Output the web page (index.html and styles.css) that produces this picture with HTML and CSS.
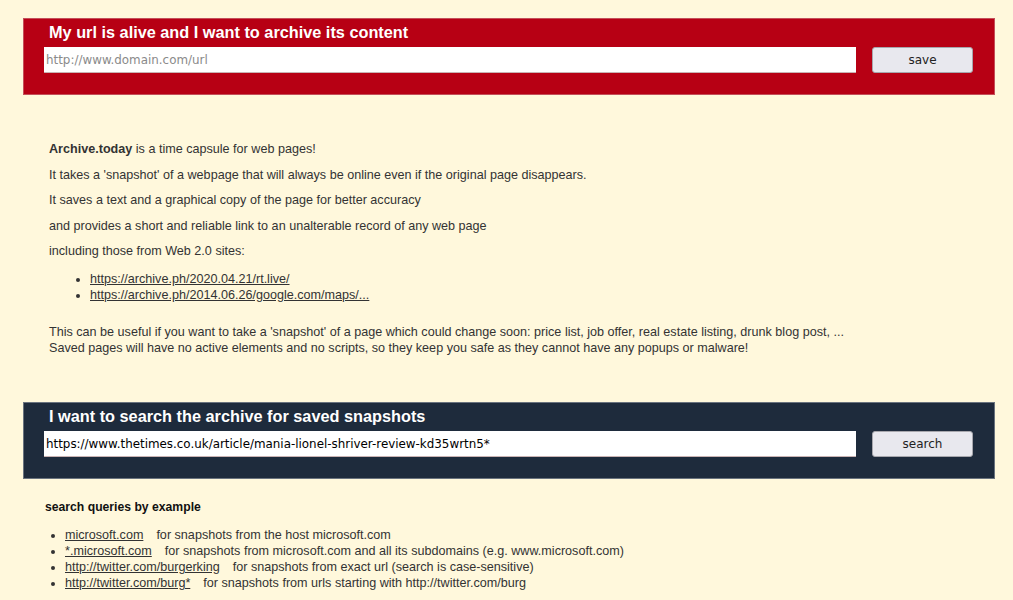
FILE: index.html
```html
<!DOCTYPE html>
<html>
<head>
<meta charset="utf-8">
<title>archive.today</title>
<link rel="stylesheet" href="styles.css">
</head>
<body>
<form class="panel panel-red">
  <div class="panel-title">My url is alive and I want to archive its content</div>
  <div class="panel-row">
    <input class="panel-input" type="text" placeholder="http://www.domain.com/url">
    <button class="panel-btn" type="button">save</button>
  </div>
</form>

<div class="about">
  <p><b>Archive.today</b> is a time capsule for web pages!</p>
  <p>It takes a 'snapshot' of a webpage that will always be online even if the original page disappears.</p>
  <p>It saves a text and a graphical copy of the page for better accuracy</p>
  <p>and provides a short and reliable link to an unalterable record of any web page</p>
  <p>including those from Web 2.0 sites:</p>
  <ul class="about-list">
    <li><a href="#">https://archive.ph/2020.04.21/rt.live/</a></li>
    <li><a href="#">https://archive.ph/2014.06.26/google.com/maps/...</a></li>
  </ul>
  <div class="about-note">This can be useful if you want to take a 'snapshot' of a page which could change soon: price list, job offer, real estate listing, drunk blog post, ...<br>Saved pages will have no active elements and no scripts, so they keep you safe as they cannot have any popups or malware!</div>
</div>

<form class="panel panel-dark">
  <div class="panel-title">I want to search the archive for saved snapshots</div>
  <div class="panel-row">
    <input class="panel-input" type="text" value="https://www.thetimes.co.uk/article/mania-lionel-shriver-review-kd35wrtn5*">
    <button class="panel-btn" type="button">search</button>
  </div>
</form>

<div class="examples">
  <div class="examples-head">search queries by example</div>
  <ul class="examples-list">
    <li><a href="#">microsoft.com</a><span class="ex-desc">for snapshots from the host microsoft.com</span></li>
    <li><a href="#">*.microsoft.com</a><span class="ex-desc">for snapshots from microsoft.com and all its subdomains (e.g. www.microsoft.com)</span></li>
    <li><a href="#">http://twitter.com/burgerking</a><span class="ex-desc">for snapshots from exact url (search is case-sensitive)</span></li>
    <li><a href="#">http://twitter.com/burg*</a><span class="ex-desc">for snapshots from urls starting with http://twitter.com/burg</span></li>
  </ul>
</div>
</body>
</html>
```

FILE: styles.css
```css
html, body {
  margin: 0;
  padding: 0;
}
body {
  background: #fff8dc;
  font-family: "Liberation Sans", Arial, sans-serif;
  font-size: 12.6px;
  color: #333;
  padding-top: 18px;
}
.panel {
  margin: 0 18px 0 23px;
  padding: 0 21px 21px 20px;
  border: 1px solid transparent;
  box-sizing: border-box;
  height: 77px;
}
.panel-red {
  background: #b70014;
  border-color: #c4505a;
}
.panel-dark {
  background: #1e2b3c;
  border-color: #6a737e;
}
.panel-title {
  color: #fff;
  font-weight: bold;
  font-size: 16.3px;
  line-height: 27px;
  padding-left: 5px;
}
.panel-row {
  display: flex;
  gap: 16px;
  align-items: center;
  margin-top: 1px;
}
.panel-input {
  flex: 1;
  height: 26px;
  box-sizing: border-box;
  border: 0;
  border-bottom: 1px solid #c9b3b3;
  padding: 0 2px;
  font-family: "DejaVu Sans", Verdana, sans-serif;
  font-size: 11.9px;
  color: #000;
  background: #fff;
  outline: none;
}
.panel-input::placeholder {
  color: #8a8a8a;
}
.panel-btn {
  width: 101px;
  height: 26px;
  box-sizing: border-box;
  border: 1px solid #a7a7ad;
  border-radius: 3px;
  background: #e8e8ee;
  font-family: "DejaVu Sans", Verdana, sans-serif;
  font-size: 12px;
  color: #222;
  padding: 0;
}
.about {
  padding: 42px 0 0 49px;
  height: 307px;
  box-sizing: border-box;
}
.about p {
  margin: 0;
  line-height: 25.5px;
}
.about-list {
  margin: 6px 0 0;
  padding-left: 41px;
  line-height: 16px;
}
.about a, .examples a {
  color: #333;
  text-decoration: underline;
}
.about-note {
  margin-top: 21px;
  line-height: 16px;
}
.examples {
  padding: 20px 0 0 45px;
}
.examples-head {
  font-weight: bold;
  font-size: 12.2px;
  line-height: 16px;
  color: #111;
}
.examples-list {
  margin: 12px 0 0;
  padding-left: 20px;
  line-height: 16px;
}
.ex-desc {
  margin-left: 13px;
}
```
